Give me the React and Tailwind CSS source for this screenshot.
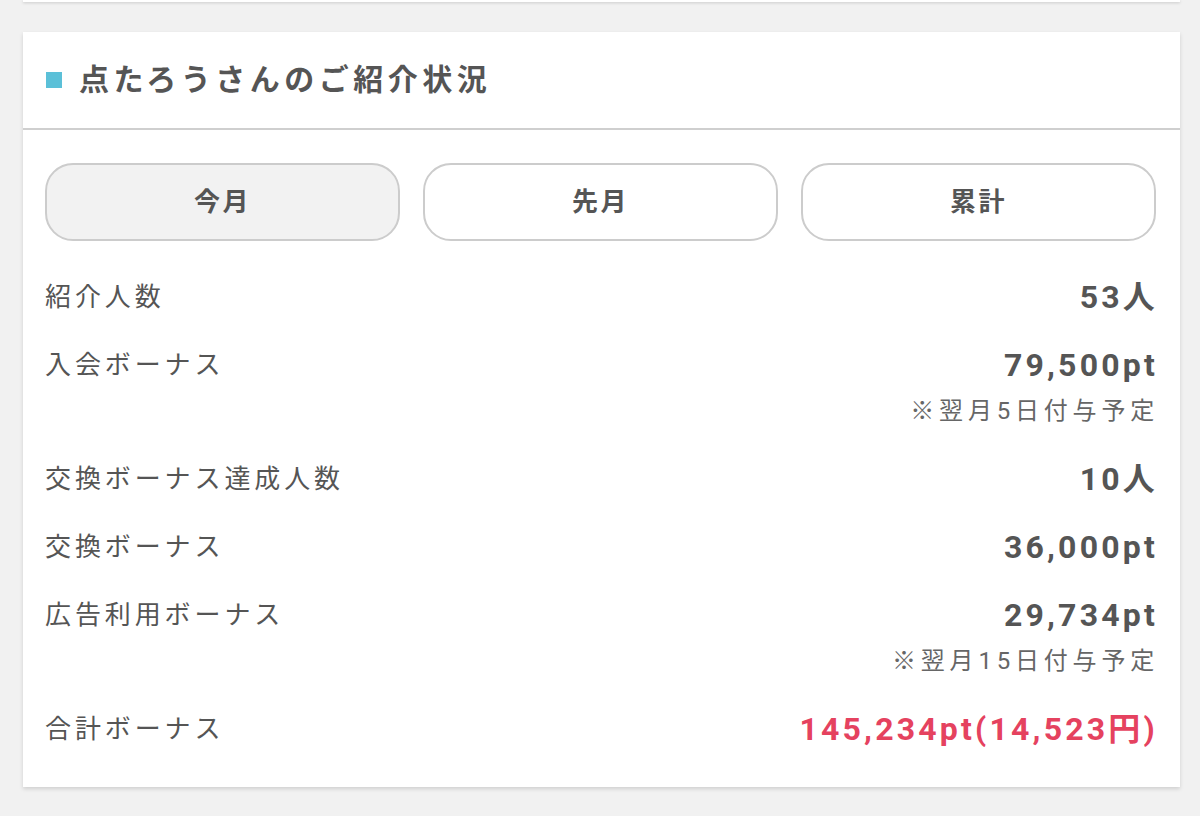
import React from "react";

const rows = [
  { label: "紹介人数", value: "53人" },
  { label: "入会ボーナス", value: "79,500pt", note: "※翌月5日付与予定" },
  { label: "交換ボーナス達成人数", value: "10人" },
  { label: "交換ボーナス", value: "36,000pt" },
  { label: "広告利用ボーナス", value: "29,734pt", note: "※翌月15日付与予定" },
  { label: "合計ボーナス", value: "145,234pt(14,523円)", total: true },
];

const tabs = ["今月", "先月", "累計"];

export default function App() {
  return (
    <div
      className="min-h-[816px] bg-[#f1f1f1] text-[#555555]"
      style={{ fontFamily: 'Roboto, "Noto Sans CJK JP", sans-serif' }}
    >
      {/* tail of the card above */}
      <div className="ml-[23px] h-[2px] w-[1157px] bg-white shadow-[0_1px_3px_rgba(0,0,0,0.18)]" />

      <div className="ml-[23px] mt-[30px] w-[1157px] bg-white shadow-[0_2px_4px_rgba(0,0,0,0.14)]">
        <div className="flex h-[98px] items-center gap-[17px] border-b-2 border-[#cfcfcf] pl-[23px]">
          <span className="block h-[16px] w-[16px] bg-[#5bc0d8]" />
          <h2 className="text-[30px] font-bold leading-none tracking-[0.15em]">
            点たろうさんのご紹介状況
          </h2>
        </div>

        <div className="pl-[22px] pr-[24px] pt-[33px] pb-[35px]">
          <div className="grid grid-cols-3 gap-[23px]">
            {tabs.map((tab, index) => (
              <button
                key={tab}
                type="button"
                className={
                  index === 0
                    ? "h-[78px] rounded-[28px] border-2 border-[#cccccc] bg-[#f2f2f2] text-[26px] font-bold tracking-[0.1em] text-[#555555]"
                    : "h-[78px] rounded-[28px] border-2 border-[#cccccc] bg-white text-[26px] font-bold tracking-[0.1em] text-[#555555]"
                }
              >
                {tab}
              </button>
            ))}
          </div>

          <dl className="mt-[33px] flex flex-col gap-[22px]">
            {rows.map((row) => (
              <div key={row.label} className="flex justify-between">
                <dt className="text-[26px] leading-[46px] tracking-[0.15em]">
                  {row.label}
                </dt>
                <dd className="flex flex-col items-end">
                  <span
                    className={
                      row.total
                        ? "mr-[-2px] text-[32px] font-bold leading-[46px] tracking-[0.1em] text-[#e5425f]"
                        : "mr-[-2px] text-[32px] font-bold leading-[46px] tracking-[0.1em]"
                    }
                  >
                    {row.value}
                  </span>
                  {row.note && (
                    <span className="mr-[-3px] text-[24px] leading-[46px] tracking-[0.2em] text-[#666666]">
                      {row.note}
                    </span>
                  )}
                </dd>
              </div>
            ))}
          </dl>
        </div>
      </div>
    </div>
  );
}
